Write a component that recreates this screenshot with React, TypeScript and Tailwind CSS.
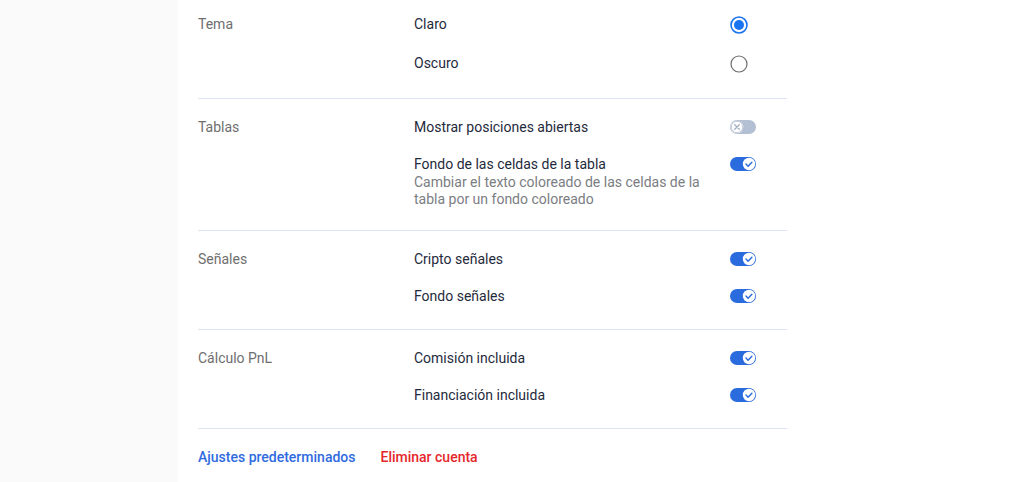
import React from "react";

type Opt = { label: string; desc?: string; kind: "radio" | "toggle"; on: boolean };

const SECTIONS: { title: string; pad: string; gap: string; opts: Opt[] }[] = [
  {
    title: "Tema",
    pad: "pt-[14px] pb-[25px]",
    gap: "gap-[19px]",
    opts: [
      { label: "Claro", kind: "radio", on: true },
      { label: "Oscuro", kind: "radio", on: false },
    ],
  },
  {
    title: "Tablas",
    pad: "pt-[19px] pb-[22px]",
    gap: "gap-[19px]",
    opts: [
      { label: "Mostrar posiciones abiertas", kind: "toggle", on: false },
      {
        label: "Fondo de las celdas de la tabla",
        desc: "Cambiar el texto coloreado de las celdas de la tabla por un fondo coloreado",
        kind: "toggle",
        on: true,
      },
    ],
  },
  {
    title: "Señales",
    pad: "pt-[19px] pb-[24px]",
    gap: "gap-[19px]",
    opts: [
      { label: "Cripto señales", kind: "toggle", on: true },
      { label: "Fondo señales", kind: "toggle", on: true },
    ],
  },
  {
    title: "Cálculo PnL",
    pad: "pt-[19px] pb-[24px]",
    gap: "gap-[19px]",
    opts: [
      { label: "Comisión incluida", kind: "toggle", on: true },
      { label: "Financiación incluida", kind: "toggle", on: true },
    ],
  },
];

function Radio({ on }: { on: boolean }) {
  return on ? (
    <svg width="18" height="18" viewBox="0 0 18 18">
      <circle cx="9" cy="9" r="8" fill="none" stroke="#1a73f0" strokeWidth="1.6" />
      <circle cx="9" cy="9" r="5" fill="#1a73f0" />
    </svg>
  ) : (
    <svg width="18" height="18" viewBox="0 0 18 18">
      <circle cx="9" cy="9" r="8" fill="none" stroke="#6b6b6b" strokeWidth="1.2" />
    </svg>
  );
}

function Toggle({ on }: { on: boolean }) {
  return on ? (
    <svg width="26" height="14" viewBox="0 0 26 14">
      <rect x="0" y="0" width="26" height="14" rx="7" fill="#2a6bdd" />
      <circle cx="19" cy="7" r="6.2" fill="#fff" />
      <path d="M16 7.1l2.1 2.1 3.8-4" fill="none" stroke="#2a6bdd" strokeWidth="1.4" strokeLinecap="round" strokeLinejoin="round" />
    </svg>
  ) : (
    <svg width="26" height="14" viewBox="0 0 26 14">
      <rect x="0" y="0" width="26" height="14" rx="7" fill="#b3bfd2" />
      <circle cx="7" cy="7" r="6.3" fill="#fff" />
      <circle cx="7" cy="7" r="5.7" fill="none" stroke="#c3ccda" strokeWidth="1" />
      <path d="M4.7 4.7l4.6 4.6M9.3 4.7l-4.6 4.6" fill="none" stroke="#a3afc2" strokeWidth="1.3" strokeLinecap="round" />
    </svg>
  );
}

export default function App() {
  return (
    <div className="flex min-h-screen bg-white text-[14px] leading-[18px]" style={{ fontFamily: "Roboto, 'Liberation Sans', sans-serif" }}>
      <aside className="w-[178px] shrink-0 bg-[#fafafa]" />
      <main className="flex-1 pl-5">
        <div className="w-[589px]">
          {SECTIONS.map(s => (
            <section key={s.title} className={`flex border-b border-[#dbe4f4] ${s.pad}`}>
              <div className="w-[216px] shrink-0 text-[#6e6e6e]">
                <p className={s.opts[0].kind === "radio" ? "mt-px" : ""}>{s.title}</p>
              </div>
              <div className={`flex-1 flex flex-col ${s.gap}`}>
                {s.opts.map(o =>
                  o.kind === "radio" ? (
                    <div key={o.label} className="flex items-center h-5">
                      <span className="flex-1 text-[#1f2a3c]">{o.label}</span>
                      <span className="w-[57px] shrink-0 flex"><span className="mt-[1px] flex"><Radio on={o.on} /></span></span>
                    </div>
                  ) : (
                    <div key={o.label} className="flex items-start">
                      <div className="flex-1 pr-2">
                        <p className="text-[#1f2a3c]">{o.label}</p>
                        {o.desc && <p className="mt-[1px] leading-[17px] text-[#7a7d82]">{o.desc}</p>}
                      </div>
                      <span className="w-[57px] shrink-0 flex mt-[2px]"><Toggle on={o.on} /></span>
                    </div>
                  )
                )}
              </div>
            </section>
          ))}
          <div className="flex gap-[25px] pt-[19px] font-medium">
            <button className="text-[#2f6be0]">Ajustes predeterminados</button>
            <button className="text-[#e5262b]">Eliminar cuenta</button>
          </div>
        </div>
      </main>
    </div>
  );
}
